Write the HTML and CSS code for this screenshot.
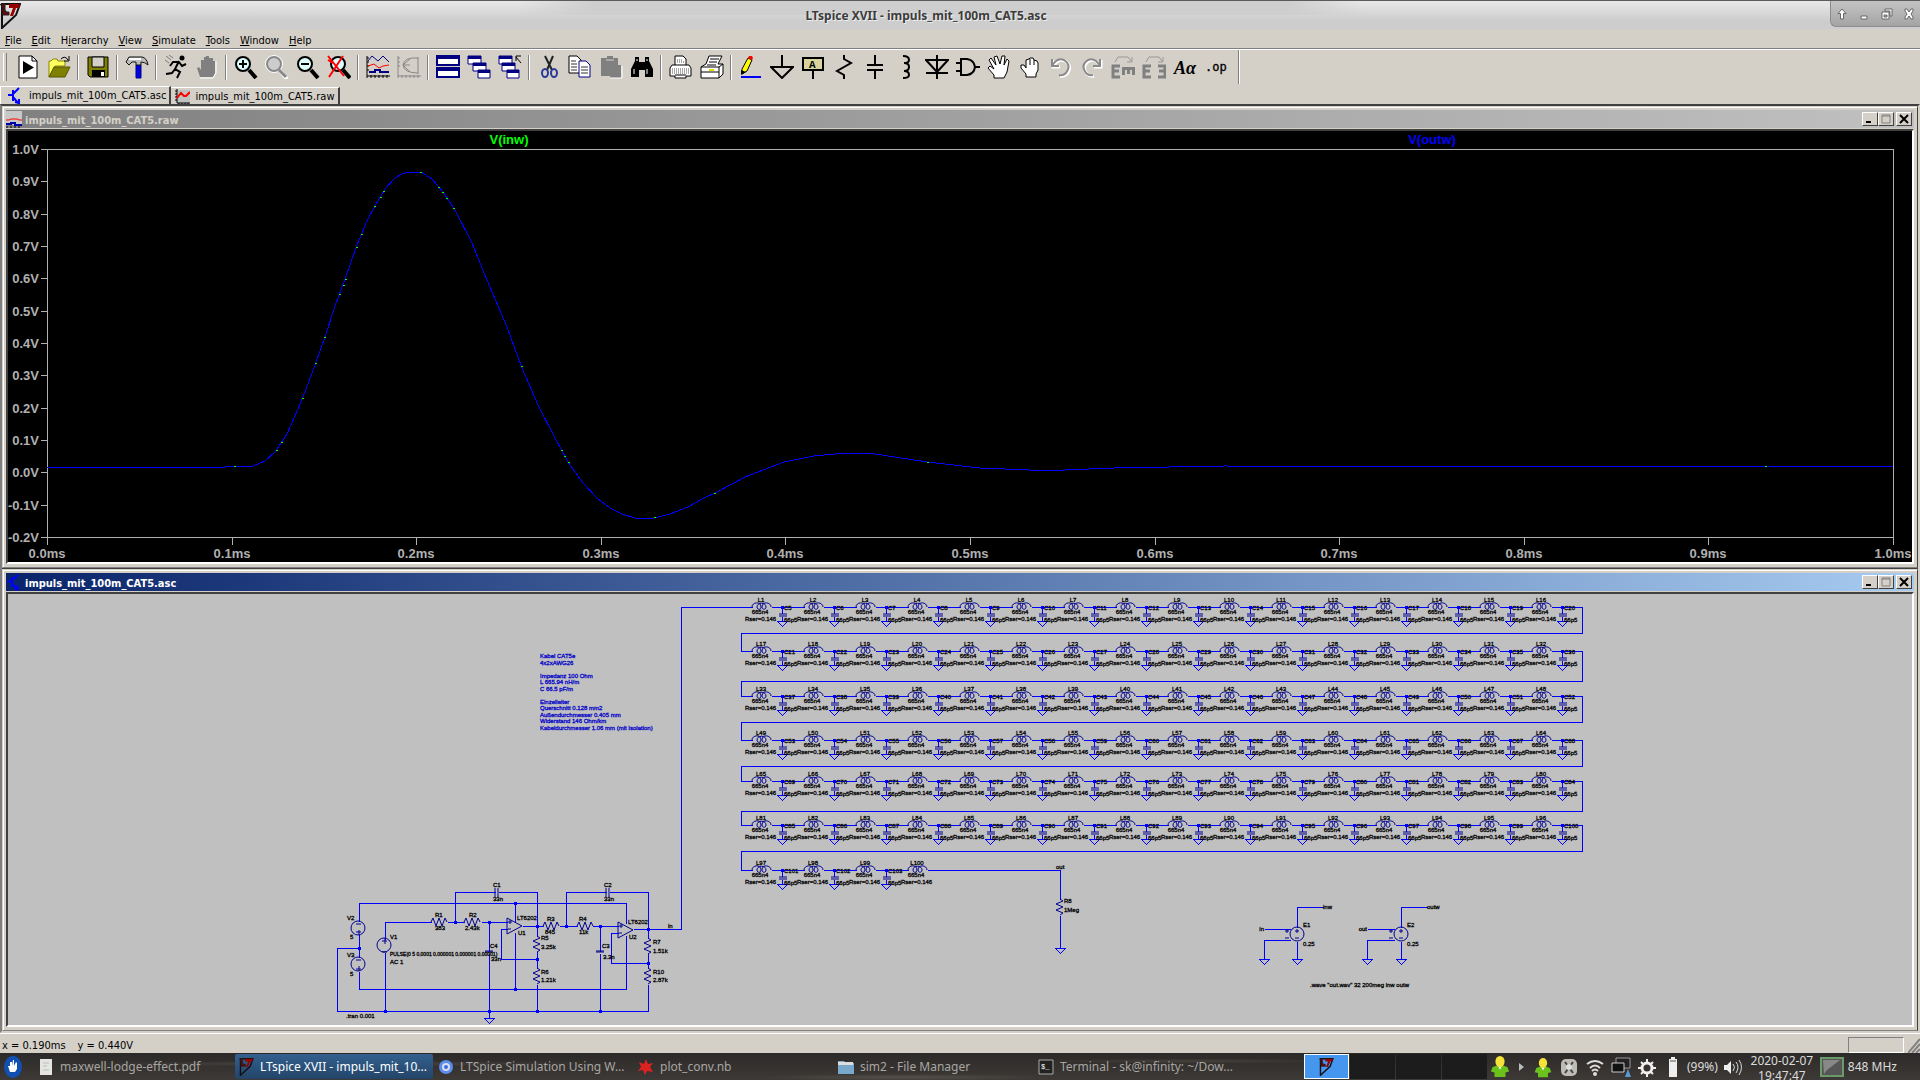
FILE: index.html
```html
<!DOCTYPE html>
<html lang="en">
<head>
    <meta charset="UTF-8">
    <meta name="viewport" content="width=device-width, initial-scale=1.0">
    <title>LTspice XVII - impuls_mit_100m_CAT5.asc</title>
    <link rel="stylesheet" href="styles.css">
</head>
<body>

<!-- Shared logo -->
<svg class="defs" aria-hidden="true">
    <symbol id="lt" viewBox="0 0 22 26">
        <path d="M3 1H21L17 12L3 25Z" fill="none" stroke="#111" stroke-width="2"/>
        <path d="M1 1L10 12M3 1H6V9H10V12H4Z" fill="#700" stroke="#222"/>
        <path d="M10 1H21L20 5H17L14 13H11L14 5H10Z" fill="#900"/>
    </symbol>
    <symbol id="transistor" viewBox="0 0 14 18">
        <path d="M0 8H5M5 3V14M5 7L11 1M5 10L11 17M7 15L11 16V12" fill="none" stroke="#00f" stroke-width="2"/>
    </symbol>
    <symbol id="person" viewBox="0 0 22 24">
        <path d="M3 12Q11 8 19 12L21 17L17 18V23H5V18L1 17Z" fill="#6cc21c"/>
        <path d="M9 11L11 15L13 11Z" fill="#fff"/>
        <ellipse cx="11" cy="6" rx="5" ry="6" fill="#f5e33a"/>
    </symbol>
</svg>

<header class="titlebar">
    <svg class="logo" width="22" height="26"><use href="#lt"/></svg>
    <h1>LTspice XVII - impuls_mit_100m_CAT5.asc</h1>
    <div class="wm-buttons">
        <button aria-label="Shade"><svg width="12" height="12"><path d="M6 1L10 5.500H7.500V11H4.500V5.500H2Z"/></svg></button>
        <button aria-label="Minimize"><svg width="12" height="12"><path d="M3 8H9V11H3Z"/></svg></button>
        <button aria-label="Restore"><svg width="12" height="12"><path d="M4 1H11V8H9V3H4Z"/><path d="M1 4H8V11H1ZM3 7H6V9H3Z" fill-rule="evenodd"/></svg></button>
        <button aria-label="Close"><svg width="12" height="12"><path d="M2 1H4L6 4L8 1H10V3L8 6L10 9V11H8L6 8L4 11H2V9L4 6L2 3Z"/></svg></button>
    </div>
</header>

<nav class="menubar">
    <button><u>F</u>ile</button>
    <button><u>E</u>dit</button>
    <button>H<u>i</u>erarchy</button>
    <button><u>V</u>iew</button>
    <button><u>S</u>imulate</button>
    <button><u>T</u>ools</button>
    <button><u>W</u>indow</button>
    <button><u>H</u>elp</button>
</nav>

<div class="toolbar">
    <button aria-label="New schematic"><svg viewBox="0 0 24 24"><path d="M3 1H16L21 6V23H3Z" fill="#fff" stroke="#000"/><path d="M16 1V6H21" fill="none" stroke="#000"/><path d="M7 6L18 12.500L7 19Z"/></svg></button>
    <button aria-label="Open"><svg viewBox="0 0 24 24"><path d="M2 22V6H4L6 4H10L11 6H18V11H8Z" fill="#ffff60" stroke="#880"/><path d="M2 22L7 12H23L18 22Z" fill="#808000" stroke="#550"/><path d="M14 4Q18 0 21 5M22 1V6H17" fill="none" stroke="#000"/></svg></button>
    <span class="sep"></span>
    <button aria-label="Save"><svg viewBox="0 0 24 24"><path d="M2 2H22V22H4L2 20Z" fill="#808000" stroke="#000"/><path d="M6 2H18V12H6Z" fill="#d4d0c8" stroke="#000"/><path d="M6 15H19V22H6Z"/><path d="M15 17H18V21H15Z" fill="#fff"/></svg></button>
    <span class="sep"></span>
    <button aria-label="Control panel"><svg viewBox="0 0 24 24"><path d="M11 10H16V23H11Z" fill="#0000e0" stroke="#008"/><path d="M1 7L4 2H17Q22 3 23 10Q20 7 16 7V10H11V7L7 7L4 10Z" fill="#bbb" stroke="#111"/><path d="M4 4H16" stroke="#fff" stroke-width="2"/></svg></button>
    <span class="sep"></span>
    <button aria-label="Run"><svg viewBox="0 0 24 24"><circle cx="18" cy="3" r="2.500"/><path d="M15 6L11 14L16 17L13 23M11 14L8 18L2 19M15 7L9 7L6 11M15 7L18 11L22 9" fill="none" stroke="#000" stroke-width="2"/><path d="M2 1L7 5M1 5L5 8M5 0L9 3" stroke="#777"/></svg></button>
    <button aria-label="Halt" disabled><svg viewBox="0 0 24 24"><path d="M5 22L2 13L4 12L6 15V5H9V2H11V1H14V3H18V6H20V18L18 22Z" fill="#808080"/><path d="M5 23H18L21 18V6" fill="none" stroke="#fff"/></svg></button>
    <span class="sep"></span>
    <button aria-label="Zoom in"><svg viewBox="0 0 24 24"><circle cx="9" cy="9" r="7" fill="#dff" stroke="#000" stroke-width="2"/><path d="M15 15L22 23" stroke="#000" stroke-width="4"/><path d="M9 5V13M5 9H13" stroke="#000" stroke-width="2"/></svg></button>
    <button aria-label="Pan" disabled><svg viewBox="0 0 24 24"><circle cx="9" cy="9" r="7" fill="none" stroke="#fff" stroke-width="4"/><circle cx="9" cy="9" r="7" fill="#ccc" stroke="#888" stroke-width="2"/><path d="M15 16L22 24" stroke="#fff" stroke-width="4"/><path d="M14 15L21 22" stroke="#888" stroke-width="3"/></svg></button>
    <button aria-label="Zoom out"><svg viewBox="0 0 24 24"><circle cx="9" cy="9" r="7" fill="#dff" stroke="#000" stroke-width="2"/><path d="M15 15L22 23" stroke="#000" stroke-width="4"/><path d="M5 9H13" stroke="#000" stroke-width="2"/></svg></button>
    <button aria-label="Zoom to fit"><svg viewBox="0 0 24 24"><circle cx="11" cy="9" r="7" fill="#dff" stroke="#000" stroke-width="2"/><path d="M16 15L23 23" stroke="#000" stroke-width="4"/><path d="M1 1L17 21M16 1L2 22M1 5L6 8" stroke="#f00" stroke-width="2"/></svg></button>
    <span class="sep"></span>
    <button aria-label="Autorange"><svg viewBox="0 0 24 24"><path d="M1 1V23M1 21H24M1 3H3M1 7H3M1 11H3M1 15H3M5 20V23M9 20V23M13 20V23M17 20V23M21 20V23" stroke="#000"/><path d="M2 6L6 1L12 6L17 1L23 7" fill="none" stroke="#000080"/><path d="M2 11L8 9L13 13L17 11L23 10" fill="none" stroke="#f00"/><path d="M3 17H9V15H14V17H23" fill="none" stroke="#000080" stroke-width="2"/></svg></button>
    <button aria-label="Nyquist" disabled><svg viewBox="0 0 24 24"><path d="M1 1V23M1 21H24M1 3H3M1 7H3M1 11H3M5 20V23M9 20V23M13 20V23M17 20V23M21 20V23" stroke="#888"/><path d="M21 2V19M21 3Q7 2 6 10Q7 18 21 18M6 10H13M13 4L6 10L13 17" fill="none" stroke="#888"/></svg></button>
    <span class="sep"></span>
    <button aria-label="Tile windows"><svg viewBox="0 0 24 24"><path d="M1 1H23V10H1ZM1 13H23V22H1Z" fill="#fff" stroke="#000080" stroke-width="2"/><path d="M1 2H23V4H1ZM1 14H23V16H1Z" fill="#000080"/></svg></button>
    <button aria-label="Cascade windows"><svg viewBox="0 0 24 24"><g fill="#fff" stroke="#000080"><path d="M1 1H14V9H1ZM6 8H19V16H6ZM11 15H23V23H11Z"/><path d="M1 2.500H14M6 9.500H19M11 16.500H23" stroke-width="3"/></g></svg></button>
    <button aria-label="Close all windows"><svg viewBox="0 0 24 24"><g fill="#fff" stroke="#000080"><path d="M1 1H14V9H1ZM4 8H17V16H4ZM9 15H21V23H9Z"/><path d="M1 2.500H14M4 9.500H17M9 16.500H21" stroke-width="3"/></g><path d="M23 8L18 2M18 6V1H23" fill="none" stroke="#000"/></svg></button>
    <span class="sep"></span>
    <button aria-label="Cut"><svg viewBox="0 0 24 24"><path d="M8 1L15 15M16 1L10 15" stroke="#222" stroke-width="2"/><g fill="none" stroke="#2b3a9a" stroke-width="2"><ellipse cx="8" cy="18" rx="3" ry="4"/><ellipse cx="17" cy="18" rx="3" ry="4"/></g></svg></button>
    <button aria-label="Copy"><svg viewBox="0 0 24 24"><path d="M1 1H9L13 5V18H1Z" fill="#fff" stroke="#000"/><path d="M11 6H18L22 10V22H11Z" fill="#fff" stroke="#000080"/><path d="M3 6H8M3 9H9M3 12H9M3 15H9M13 12H20M13 15H20M13 18H20" stroke="#333"/></svg></button>
    <button aria-label="Paste" disabled><svg viewBox="0 0 24 24"><path d="M2 3H8V1H14V3H19V10H22V23H11V21H2Z" fill="#808080"/><path d="M7 5H15" stroke="#d4d0c8"/><path d="M11 23H23V11" fill="none" stroke="#fff"/></svg></button>
    <button aria-label="Find"><svg viewBox="0 0 24 24"><path d="M5 2H9V7H15V2H19V6L23 14V22H15V15H9V22H1V14L5 6Z"/><path d="M4 14V19M17 14V19M7 4V6M17 4V6" stroke="#fff"/></svg></button>
    <span class="sep"></span>
    <button aria-label="Print setup"><svg viewBox="0 0 24 24"><path d="M6 10V1H14L17 4V10H20L22 13V21H17V23H6V21H1V13L3 10Z" fill="#fff" stroke="#000"/><path d="M3 14H20M3 16H20M3 18H20M8 5H14M8 7H15" stroke="#555" stroke-dasharray="1 1"/><path d="M6 10H17M6 20H17" stroke="#000"/></svg></button>
    <button aria-label="Print"><svg viewBox="0 0 24 24"><path d="M1 12L6 9L9 1H22L18 9H23V19L19 23H1Z" fill="#fff" stroke="#000"/><path d="M1 12H19L23 9M19 12V23M1 17H19M10 4H19M9 7H17M7 10H16" fill="none" stroke="#000"/><path d="M9 15H14" stroke="#dd0" stroke-width="2"/></svg></button>
    <span class="sep"></span>
    <button aria-label="Wire"><svg viewBox="0 0 24 24"><path d="M3 19L3 14L9 3L13 5L8 16Z" fill="#ff0" stroke="#000"/><path d="M9 3L10 1H13L14 3L13 5Z" fill="#f00"/><path d="M2 15L2 20L7 17Z"/><path d="M2 22H22" stroke="#00f" stroke-width="2"/></svg></button>
    <button aria-label="Ground"><svg viewBox="0 0 24 24"><path d="M12 0V12M1 12H23L12 23Z" fill="none" stroke="#000" stroke-width="2"/></svg></button>
    <button aria-label="Label net"><svg viewBox="0 0 24 24"><path d="M2 3H22V15H2Z" fill="#d8d49c" stroke="#000" stroke-width="2"/><path d="M12 15V24" stroke="#000" stroke-width="2"/><text x="8" y="13" class="icon-mono">A</text></svg></button>
    <button aria-label="Resistor"><svg viewBox="0 0 24 24"><path d="M12 0V4L19 8L5 16L12 20V24" fill="none" stroke="#000" stroke-width="2"/></svg></button>
    <button aria-label="Capacitor"><svg viewBox="0 0 24 24"><path d="M12 0V10M12 15V24M4 10H20M4 15H20" stroke="#000" stroke-width="2"/></svg></button>
    <button aria-label="Inductor"><svg viewBox="0 0 24 24"><path d="M9 1Q15 1 15 5Q15 8 10 8Q15 8 15 12Q15 16 10 16Q15 16 15 20Q15 23 9 23" fill="none" stroke="#000" stroke-width="2"/></svg></button>
    <button aria-label="Diode"><svg viewBox="0 0 24 24"><path d="M12 0V24M1 5H23L12 17ZM1 18H23" fill="none" stroke="#000" stroke-width="2"/></svg></button>
    <button aria-label="Component"><svg viewBox="0 0 24 24"><path d="M5 4H11Q18 5 19 12Q18 19 11 20H5ZM0 8H5M0 16H5M19 12H24" fill="none" stroke="#000" stroke-width="2"/></svg></button>
    <button aria-label="Move"><svg viewBox="0 0 24 24"><path d="M7 23V20L1 13L3 11L7 14L2 5L4 3L9 10L7 2L10 1L13 9L15 1H18L17 10L20 4L22 6L20 17L17 23Z" fill="#fff" stroke="#000"/></svg></button>
    <button aria-label="Drag"><svg viewBox="0 0 24 24"><path d="M8 22V19L3 13V10H6L8 13V5L11 4L12 3H15L16 5L19 6L20 8V15L18 19V22Z" fill="#fff" stroke="#000"/><path d="M12 4V10M16 5V10" stroke="#000"/></svg></button>
    <button aria-label="Undo" disabled><svg viewBox="0 0 24 24"><path d="M4 5V12H11M4 12Q9 3 16 6Q24 11 18 19Q15 22 11 21" fill="none" stroke="#fff" stroke-width="3"/><path d="M3 4V11H10M3 11Q8 2 15 5Q23 10 17 18Q14 21 10 20" fill="none" stroke="#8a8a8a" stroke-width="2"/></svg></button>
    <button aria-label="Redo" disabled><svg viewBox="0 0 24 24"><path d="M21 5V12H14M21 12Q16 3 9 6Q1 11 7 19Q10 22 14 21" fill="none" stroke="#fff" stroke-width="3"/><path d="M20 4V11H13M20 11Q15 2 8 5Q0 10 6 18Q9 21 13 20" fill="none" stroke="#8a8a8a" stroke-width="2"/></svg></button>
    <button aria-label="Rotate" disabled><svg viewBox="0 0 24 24"><path d="M4 7L7 2H17L20 6M21 2V7H16" fill="none" stroke="#999"/><path d="M9 11H2V22H9M2 16H8" fill="none" stroke="#808080" stroke-width="3"/><path d="M11 12H24V15H11ZM11 15H14V20H11ZM16 15H19V19H16ZM21 15H24V20H21Z" fill="#808080"/></svg></button>
    <button aria-label="Mirror" disabled><svg viewBox="0 0 24 24"><path d="M4 7L7 2H17L20 6M21 2V7H16" fill="none" stroke="#999"/><path d="M9 11H2V22H9M2 16H8M16 11H23V22H16M23 16H17" fill="none" stroke="#808080" stroke-width="3"/></svg></button>
    <button aria-label="Text"><svg viewBox="0 0 24 24"><text x="1" y="19" class="icon-serif">Aα</text></svg></button>
    <button aria-label="SPICE directive"><svg viewBox="0 0 24 24"><text x="1" y="16" class="icon-op">.op</text></svg></button>
    <span class="toolbar-end"></span>
</div>

<div class="tabs" role="tablist">
    <button class="tab active" role="tab"><svg width="14" height="18"><use href="#transistor"/></svg>impuls_mit_100m_CAT5.asc</button>
    <button class="tab" role="tab"><svg width="16" height="16"><path d="M3 1H16V14H3Z" fill="#c0c0c0"/><path d="M3 0V14H16M1 2H3M1 5H3M1 8H3M1 11H3M5 14V16M8 14V16M11 14V16M14 14V16" fill="none" stroke="#000"/><path d="M3 9L7 4L10 7L12 7L16 3" fill="none" stroke="#f00" stroke-width="2"/></svg>impuls_mit_100m_CAT5.raw</button>
</div>

<main class="workspace">
    <!-- Waveform window -->
    <section class="window">
        <div class="caption">
            <svg width="16" height="17"><path d="M0 0H16V14H0Z" fill="#c8c8c8"/><path d="M0 9H3L5 8H11L13 9H16" fill="none" stroke="#f00"/><path d="M0 13H5V12H9V14H16" fill="none" stroke="#00a" stroke-width="2"/><path d="M0 16H16" stroke="#000" stroke-dasharray="2 2"/></svg>
            <h2>impuls_mit_100m_CAT5.raw</h2>
            <div class="caption-buttons">
                <button aria-label="Minimize"><svg width="12" height="10"><path d="M2 8H7" stroke="#000" stroke-width="2"/></svg></button><button aria-label="Maximize"><svg width="12" height="10"><path d="M2 1H10V9H2ZM2 2H10" fill="none" stroke="#808080"/></svg></button><button aria-label="Close" class="close"><svg width="12" height="10"><path d="M2 1L10 9M10 1L2 9" stroke="#000" stroke-width="2"/></svg></button>
            </div>
        </div>
        <div class="client plot"><svg id="plot" viewBox="8 131 1904 431"></svg></div>
    </section>

    <!-- Schematic window -->
    <section class="window">
        <div class="caption current">
            <svg width="16" height="17"><use href="#transistor"/></svg>
            <h2>impuls_mit_100m_CAT5.asc</h2>
            <div class="caption-buttons">
                <button aria-label="Minimize"><svg width="12" height="10"><path d="M2 8H7" stroke="#000" stroke-width="2"/></svg></button><button aria-label="Maximize"><svg width="12" height="10"><path d="M2 1H10V9H2ZM2 2H10" fill="none" stroke="#808080"/></svg></button><button aria-label="Close" class="close"><svg width="12" height="10"><path d="M2 1L10 9M10 1L2 9" stroke="#000" stroke-width="2"/></svg></button>
            </div>
        </div>
        <div class="client schematic"><svg id="schematic" viewBox="8 594 1904 431"></svg></div>
    </section>
</main>

<div class="statusbar">
    <span>x = 0.190ms</span>
    <span>y = 0.440V</span>
    <span class="status-box"></span>
    <svg width="12" height="16"><path d="M0 16L12 2M4 16L12 7M8 16L12 12" stroke="#808080" stroke-width="2"/></svg>
</div>

<footer class="taskbar">
    <button class="start" aria-label="Applications"><svg width="18" height="26"><ellipse cx="9" cy="13" rx="9" ry="11" fill="#1150b0"/><path d="M6 18L4 12L6 12V8H8V12L9 6H10V12L12 8L13 9V15L11 18Z" fill="#fff"/></svg></button>
    <button class="task"><svg width="22" height="18"><path d="M5 1H17V17H5Z" fill="#e4e4e0"/><path d="M8 5H14M8 8H12M8 12H14" stroke="#bbb"/></svg>maxwell-lodge-effect.pdf</button>
    <button class="task active"><svg width="22" height="18"><use href="#lt"/></svg>LTspice XVII - impuls_mit_10...</button>
    <button class="task"><svg width="22" height="18"><circle cx="11" cy="9" r="7" fill="#5b8def"/><circle cx="11" cy="9" r="3" fill="#3b6fd8" stroke="#dde" stroke-width="2"/></svg>LTSpice Simulation Using W...</button>
    <button class="task"><svg width="22" height="18"><path d="M11 1L13 6L18 5L15 9L18 14L12 13L10 17L8 12L3 13L6 9L4 4L9 6Z" fill="#d22"/></svg>plot_conv.nb</button>
    <button class="task"><svg width="22" height="18"><path d="M3 3H9L11 5H19V16H3Z" fill="#78a8cc"/><path d="M3 4H18V7H3Z" fill="#ddd"/></svg>sim2 - File Manager</button>
    <button class="task"><svg width="22" height="18"><path d="M4 2H18V16H4Z" fill="#222" stroke="#aaa"/><text x="6" y="11" class="prompt">$_</text></svg>Terminal - sk@infinity: ~/Dow...</button>
    <div class="pager">
        <button class="here" aria-label="Workspace 1"><svg width="16" height="18"><use href="#lt"/></svg></button>
        <button aria-label="Workspace 2"></button>
        <button aria-label="Workspace 3"></button>
        <button aria-label="Workspace 4"></button>
    </div>
    <div class="tray">
        <svg width="26" height="22"><use href="#person"/></svg>
        <svg width="17" height="22"><path d="M6 7L11 11L6 15Z" fill="#bbb"/></svg>
        <svg width="26" height="22"><use href="#person" y="2" height="20"/></svg>
        <svg width="26" height="22"><rect x="5" y="3" width="16" height="17" rx="5" fill="#bdbdb5"/><path d="M9 6L17 17M17 6L9 17" stroke="#444" stroke-width="2"/><circle cx="13" cy="11" r="3" fill="#ddd"/></svg>
        <svg width="26" height="22"><path d="M5 8Q13 2 21 8M8 12Q13 7 18 12M10 15Q13 12 16 15" fill="none" stroke="#ddd" stroke-width="2"/><circle cx="13" cy="18" r="2" fill="#ddd"/></svg>
        <svg width="26" height="22"><path d="M8 2H22V12H8Z" fill="#222" stroke="#999"/><path d="M4 7H16V16H4Z" fill="#111" stroke="#ccc"/><path d="M17 21L20 13L23 21Z" fill="#5b9bd5"/></svg>
        <svg width="26" height="22"><circle cx="13" cy="12" r="5" fill="none" stroke="#eee" stroke-width="3"/><path d="M13 3V7M13 17V21M4 12H8M18 12H22M7 6L9 8M17 16L19 18M19 6L17 8M9 16L7 18" stroke="#eee" stroke-width="2"/></svg>
        <svg width="26" height="22"><path d="M9 3H17V21H9ZM11 1H15V3H11Z" fill="#eee"/><path d="M10 5H16" stroke="#555"/></svg>
        <span>(99%)</span>
        <svg width="26" height="22"><path d="M5 9H8L12 5V18L8 14H5Z" fill="#eee"/><path d="M14 8Q17 11 14 15M17 6Q21 11 17 17M20 4Q25 11 20 19" fill="none" stroke="#ddd"/></svg>
        <time class="clock" datetime="2020-02-07T19:47:47">2020-02-07<br>19:47:47</time>
        <svg width="26" height="22"><path d="M2 2H24V20H2Z" fill="#555" stroke="#6a9a6a" stroke-width="2"/><path d="M4 4H21L8 14L5 18Z" fill="#888"/></svg>
        <span>848 MHz</span>
    </div>
</footer>

<script src="script.js"></script>

</body>
</html>
```

FILE: styles.css
```css
* {
    box-sizing: border-box;
}
body {
    font-family: "DejaVu Sans Condensed", "DejaVu Sans", sans-serif;
    font-size: 11px;
    font-stretch: condensed;
    color: #000;
    background-color: #d4d0c8;
    margin: 0;
    min-height: 100vh;
    display: flex;
    flex-direction: column;
    overflow: hidden;
}
button {
    font: inherit;
    color: inherit;
    background: none;
    border: none;
    margin: 0;
    padding: 0;
}
h1, h2 {
    margin: 0;
}
svg {
    display: block;
    flex: none;
}
.defs {
    width: 0;
    height: 0;
    position: absolute;
}

/* Outer window title */
.titlebar {
    height: 29px;
    display: grid;
    grid-template-columns: 24px 1fr 92px;
    border-top: 1px solid #5c5a5a;
    background:
        linear-gradient(90deg, transparent 27%, #cecece 31%, #cecece 67%, transparent 71%) no-repeat 0 0 / 100% 14px,
        linear-gradient(#e8e8e8, #cdcdcd 70%);
}
.titlebar .logo {
    margin: 2px 0 0 -1px;
}
.titlebar h1 {
    font: bold 12px/30px "Noto Sans", sans-serif;
    color: #3c3c3c;
    text-align: center;
    text-shadow: 1px 1px 0 #eee;
}
.wm-buttons {
    height: 26px;
    display: flex;
    justify-content: space-around;
    align-items: center;
    border-bottom: 1px solid #8c8c8c;
    border-left: 1px solid #8c8c8c;
    border-bottom-left-radius: 6px;
    background: linear-gradient(#c4c4c4, #a4a4a4);
    margin-left: 2px;
}
.wm-buttons path {
    fill: #fff;
    stroke: #666;
}

/* Menu and toolbar */
.menubar {
    height: 20px;
    display: flex;
    border-bottom: 1px solid #808080;
}
.menubar button {
    padding: 5px 5px 1px;
}
.toolbar {
    height: 37px;
    display: flex;
    align-items: center;
    border-top: 1px solid #fff;
    padding: 0 0 2px 3px;
}
.toolbar::before {
    content: "";
    width: 2px;
    height: 28px;
    border-left: 1px solid #fff;
    border-right: 1px solid #808080;
    margin-right: 5px;
}
.toolbar button {
    width: 31px;
    display: flex;
    justify-content: center;
}
.toolbar button svg {
    width: 24px;
    height: 24px;
}
.sep {
    width: 2px;
    height: 25px;
    border-left: 1px solid #808080;
    border-right: 1px solid #fff;
    margin: 0 3px;
}
.toolbar-end {
    width: 2px;
    height: 34px;
    border-left: 1px solid #808080;
    border-right: 1px solid #fff;
    margin-left: 7px;
}
.icon-mono {
    font: bold 11px "Liberation Mono", monospace;
}
.icon-serif {
    font: italic bold 18px "Liberation Serif", serif;
}
.icon-op {
    font: 12px "DejaVu Sans Mono", monospace;
    stroke: #000;
    stroke-width: .3;
}
.tabs {
    height: 18px;
    display: flex;
    align-items: flex-end;
}
.tab {
    height: 17px;
    display: flex;
    align-items: center;
    gap: 5px;
    padding: 1px 3px 0;
    border-top: 1px solid #fff;
    border-right: 2px solid #404040;
}
.tab.active {
    height: 18px;
    gap: 7px;
    padding: 0 3px 0 7px;
    border-left: 1px solid #fff;
}

/* MDI area */
.workspace {
    flex: 1;
    min-height: 0;
    display: flex;
    flex-direction: column;
    gap: 1px;
    background-color: #404040;
    border-top: 2px solid #404040;
    border-left: 2px solid #808080;
    border-right: 2px solid #d4d0c8;
    border-bottom: 2px solid #d4d0c8;
}
.window {
    flex: 1;
    min-height: 0;
    display: flex;
    flex-direction: column;
    background-color: #d4d0c8;
    border: 1px solid #d4d0c8;
    border-right-color: #404040;
    border-bottom-color: #808080;
    box-shadow: inset 1px 1px 0 #fff;
    padding: 3px;
}
.caption {
    height: 18px;
    display: flex;
    align-items: center;
    gap: 3px;
    padding-right: 2px;
    margin-bottom: 1px;
    color: #d4d0c8;
    background: linear-gradient(90deg, #808080, #c0c0c0);
}
.caption.current {
    color: #fff;
    background: linear-gradient(90deg, #0a246a, #a6caf0);
}
.caption h2 {
    flex: 1;
    font-size: 11px;
    padding-top: 2px;
}
.caption-buttons {
    display: flex;
}
.caption-buttons button {
    width: 16px;
    height: 14px;
    display: flex;
    justify-content: center;
    align-items: center;
    background-color: #d4d0c8;
    border: 1px solid #fff;
    border-right-color: #404040;
    border-bottom-color: #404040;
}
.caption-buttons .close {
    margin-left: 2px;
}
.client {
    flex: 1;
    min-height: 0;
    border: 2px solid #fff;
    border-top-color: #404040;
    border-left-color: #404040;
}
.client svg {
    width: 100%;
    height: 100%;
}

/* Waveform plot */
.plot {
    background-color: #000;
}
.axis {
    fill: none;
    stroke: #b0b0b0;
    shape-rendering: crispEdges;
}
.axis-label {
    font: bold 13px "Liberation Sans", sans-serif;
    fill: #b0b0b0;
}
.trace-in {
    font: bold 13px "Liberation Sans", sans-serif;
    fill: #0f0;
}
.trace-out {
    font: bold 13px "Liberation Sans", sans-serif;
    fill: #00f;
}
.trace {
    fill: none;
    stroke: #00f;
    shape-rendering: crispEdges;
}

/* Schematic */
.schematic {
    background-color: #c0c0c0;
}
.wire {
    fill: none;
    stroke: #00f;
    shape-rendering: crispEdges;
}
.part {
    fill: none;
    stroke: #000090;
}
.node {
    fill: #00f;
    shape-rendering: crispEdges;
}
.note {
    font: 6px "Liberation Sans", sans-serif;
    fill: #000;
    stroke: #000;
    stroke-width: .3;
}
.note.small {
    font-size: 5px;
}
.note.comment {
    fill: #0000c8;
    stroke: #0000c8;
}

.statusbar {
    height: 20px;
    display: flex;
    align-items: center;
    gap: 12px;
    border-top: 1px solid #fff;
    padding: 3px 0 0 2px;
}
.status-box {
    width: 56px;
    height: 16px;
    border: 1px solid #fff;
    border-top-color: #808080;
    border-left-color: #808080;
    margin-left: auto;
}
.statusbar svg {
    margin-left: -8px;
}

/* Desktop panel */
.taskbar {
    height: 27px;
    display: flex;
    align-items: center;
    font: 12px/15px "Noto Sans", sans-serif;
    color: #a8a6a2;
    background:
        radial-gradient(ellipse at 18% 40%, #4a4542, transparent 12%),
        radial-gradient(ellipse at 47% 90%, #55504a, transparent 10%),
        radial-gradient(ellipse at 62% 30%, #46423c, transparent 9%),
        linear-gradient(#2c2a29, #3d3936);
}
.start {
    width: 31px;
    padding-left: 4px;
    margin-right: 4px;
}
.task {
    width: 198px;
    height: 25px;
    display: flex;
    align-items: center;
    gap: 3px;
    border-radius: 2px;
    margin-right: 2px;
    white-space: nowrap;
}
.task.active {
    color: #fff;
    background: linear-gradient(#33608f, #234468);
}
.prompt {
    font: 7px "Liberation Mono", monospace;
    fill: #fff;
}
.pager {
    display: flex;
    gap: 1px;
    margin-left: auto;
}
.pager button {
    width: 45px;
    height: 25px;
    background-color: #1c1c1c;
}
.pager .here {
    display: flex;
    justify-content: center;
    align-items: center;
    background-color: #4596ee;
    border: 1px solid #fff;
}
.tray {
    display: flex;
    align-items: center;
    color: #dcdcdc;
    padding-right: 22px;
}
.tray span {
    margin: 0 1px;
}
.clock {
    width: 74px;
    height: 27px;
    overflow: hidden;
    text-align: center;
}
.tray span:last-child {
    margin-left: 3px;
}
```

FILE: script.js
```javascript
const plot = document.getElementById('plot');
const schematic = document.getElementById('schematic');

// ---- Waveform plot ----
const left = 47, right = 1893, top1V = 149, bottom = 537;

// Screen points of the V(outw) trace
const trace = [
    [47, 467], [225, 467], [240, 466], [253, 466], [265, 461], [275, 452], [287, 434], [295, 416],
    [303, 397], [315, 365], [325, 337], [335, 306], [345, 279], [357, 245], [367, 221],
    [375, 206], [385, 189], [395, 178], [402, 174], [408, 172], [421, 172], [432, 179],
    [443, 192], [455, 210], [472, 243], [487, 280], [507, 327], [522, 368], [538, 405],
    [555, 438], [568, 462], [583, 483], [597, 498], [610, 508], [622, 514], [635, 518],
    [654, 518], [670, 514], [688, 507], [702, 499], [717, 492], [745, 477], [784, 462],
    [814, 456], [845, 453], [875, 454], [927, 462], [980, 468], [1029, 470], [1065, 470],
    [1114, 468], [1225, 466], [1347, 467], [1600, 466], [1893, 467]
];

// Pixels where V(inw) shows through
const visibleIn = [
    [234, 466], [276, 450], [281, 442], [302, 398], [315, 363], [324, 337], [339, 294],
    [343, 285], [345, 279], [356, 247], [361, 234], [374, 206], [380, 197], [383, 191],
    [420, 172], [438, 187], [442, 192], [446, 198], [453, 208], [521, 366], [561, 450],
    [564, 456], [568, 462], [654, 517], [714, 493], [927, 462], [1765, 466]
];

function drawPlot() {
    let axis = `M${left} ${top1V}H${right}V${bottom}H${left}Z`;
    let labels = '';
    for (let i = 0; i <= 12; i++) {
        const y = Math.round(top1V + i * (bottom - top1V) / 12);
        axis += `M${left - 7} ${y}H${left}`;
        labels += `<text class="axis-label" text-anchor="end" x="39" y="${y + 5}">${((10 - i) / 10).toFixed(1)}V</text>`;
    }
    for (let i = 0; i <= 10; i++) {
        const x = Math.round(left + i * (right - left) / 10);
        axis += `M${x} ${bottom}V${bottom + 7}`;
        labels += `<text class="axis-label" text-anchor="middle" x="${x}" y="558">${(i / 10).toFixed(1)}ms</text>`;
    }
    const dots = visibleIn.map(p => `<rect x="${p[0]}" y="${p[1]}" width="2" height="1" fill="#0f0"/>`).join('');
    plot.innerHTML = `
        <path class="axis" d="${axis}" transform="translate(.5 .5)"/>${labels}
        <text class="trace-in" text-anchor="middle" x="509" y="144">V(inw)</text>
        <text class="trace-out" text-anchor="middle" x="1432" y="144">V(outw)</text>
        <polyline class="trace" points="${trace.join(' ')}"/>${dots}`;
}

// ---- Schematic ----
let out = '';

function wire(d) { out += `<path class="wire" transform="translate(.5 .5)" d="${d}"/>`; }
function part(d) { out += `<path class="part" d="${d}"/>`; }
function node(x, y) { out += `<rect class="node" x="${x - 1}" y="${y - 1}" width="3" height="3"/>`; }
function ground(x, y) { wire(`M${x - 5} ${y}H${x + 5}L${x} ${y + 5}Z`); }
// y is the middle of the text line
function note(x, y, text, anchor = 'start', cls = '') {
    out += `<text class="note ${cls}" text-anchor="${anchor}" x="${x}" y="${y + 2}">${text}</text>`;
}
function resistorH(x, y) { part(`M${x} ${y}l2 -4l3 8l3 -8l3 8l3 -8l2 4`); }
function resistorV(x, y) { part(`M${x} ${y}l3 2l-7 3l7 3l-7 3l7 3l-3 2`); }
function source(x, y) { part(`M${x - 7} ${y}a7 7 0 1 0 14 0a7 7 0 1 0 -14 0`); }

// Delay line: 100 LC sections in rows of 16
function drawDelayLine() {
    const rows = [607, 651, 696, 740, 781, 825, 870];
    const returns = [633, 681, 722, 766, 811, 851];
    const pitch = 52;
    let n = 1;
    rows.forEach((y, r) => {
        const count = r === 6 ? 4 : 16;
        for (let i = 0; i < count; i++, n++) {
            const x = 752 + i * pitch;
            part(`M${x} ${y}C${x} ${y - 5} ${x + 9} ${y - 6} ${x + 9} ${y}C${x + 9} ${y + 3} ${x + 5} ${y + 3} ${x + 5} ${y}C${x + 5} ${y - 5} ${x + 14} ${y - 5} ${x + 14} ${y}C${x + 14} ${y + 3} ${x + 10} ${y + 3} ${x + 10} ${y}C${x + 10} ${y - 6} ${x + 19} ${y - 5} ${x + 19} ${y}`);
            note(x + 9, y - 7, 'L' + n, 'middle');
            note(x + 8, y + 5, '665n4', 'middle');
            note(x - 7, y + 12, 'Rser=0.146');
            if (n === 100) {
                wire(`M${x + 19} ${y}H1060V899`);
                continue;
            }
            const c = x + 30;
            wire(`M${x + 19} ${y}H${i === 15 ? 1582 : x + pitch}`);
            node(c, y);
            wire(`M${c} ${y}V${y + 6}M${c} ${y + 9}V${y + 14}`);
            part(`M${c - 3} ${y + 7}h8M${c - 3} ${y + 9}h8`);
            ground(c, y + 14);
            note(c + 2, y + 1, 'C' + (n + 4));
            note(c + 2, y + 13, '66p5');
        }
        if (r < 6) {
            wire(`M1582 ${y}V${returns[r]}H741V${rows[r + 1]}H752`);
        }
    });
    wire('M752 607H681V929H648');
}

// Input filter with the two op-amps
function drawFilter() {
    wire('M359 921V903H626V923M359 934V957M359 971V989H626V935M359 948H337V1011H648V984');
    wire('M385 939V922H431M385 952V1011M447 922H464M481 922H507M455 922V892H495M498 892H537V936');
    wire('M489 922V951M489 953V1017M515 903V922M515 932V989M507 929H501V959H537M522 926H543');
    wire('M537 951V968M537 984V1011M559 926H577M566 926V892H606M609 892H648V938M592 926H618');
    wire('M600 926V951M600 953V1011M618 933H611V963H648M633 929H648M648 953V968');
    ground(489, 1018);
    source(358, 928);
    source(358, 964);
    source(384, 945);
    part('M356 924H361M356 960H361M356 932H361M359 930V935M356 969H361M359 966V971M382 941H387M385 938V944M382 952H387');
    resistorH(431, 922);
    resistorH(464, 922);
    resistorH(543, 926);
    resistorH(577, 926);
    resistorV(537, 936);
    resistorV(537, 968);
    resistorV(648, 938);
    resistorV(648, 968);
    part('M495 888V897M498 888V897M606 888V897M609 888V897M485 952H493M596 952H604M485 951H493M596 951H604');
    part('M507 918V934L522 926ZM618 922V938L633 930ZM508 922H512M510 920V924M508 929H511M619 926H623M621 924V928M619 933H622');
    [[359, 948], [385, 1011], [455, 922], [489, 922], [489, 1011], [515, 903], [515, 989], [537, 926],
     [537, 959], [537, 1011], [566, 926], [600, 926], [600, 1011], [648, 929], [648, 963]].forEach(p => node(p[0], p[1]));

    [[347, 918, 'V2'], [350, 937, '5'], [347, 955, 'V3'], [350, 974, '5'], [390, 937, 'V1'],
     [390, 962, 'AC 1'], [346, 1016, '.tran 0.001'],
     [435, 915, 'R1'], [435, 928, '383'], [469, 915, 'R2'], [465, 928, '2.43k'], [493, 885, 'C1'], [493, 899, '33n'],
     [517, 918, 'LT6202'], [518, 933, 'U1'], [604, 885, 'C2'], [604, 899, '33n'], [628, 922, 'LT6202'], [629, 937, 'U2'],
     [547, 919, 'R3'], [545, 932, '845'], [579, 919, 'R4'], [579, 932, '11k'], [490, 946, 'C4'], [491, 959, '33n'],
     [602, 946, 'C3'], [603, 957, '3.3n'], [541, 938, 'R5'], [541, 947, '3.25k'], [541, 972, 'R6'], [541, 980, '1.21k'],
     [653, 942, 'R7'], [653, 951, '1.51k'], [653, 972, 'R10'], [653, 980, '2.87k'], [668, 926, 'in']
    ].forEach(t => note(t[0], t[1], t[2]));
    note(390, 954, 'PULSE(0 5 0.0001 0.000001 0.000001 0.00001)', 'start', 'small');
}

function drawOutputs() {
    // Load
    resistorV(1060, 899);
    wire('M1060 915V948');
    ground(1060, 948);
    note(1056, 867, 'out');
    note(1064, 901, 'R8');
    note(1064, 910, '1Meg');

    // Controlled sources
    [[1297, 1264, 'in', 'inw', 'E1'], [1401, 1367, 'out', 'outw', 'E2']].forEach(([x, gx, input, output, name]) => {
        wire(`M${x} 927V907H${x + 26}M${gx} 929H${x - 7}M${x - 7} 940H${gx}V959M${x} 941V959`);
        ground(gx, 959);
        ground(x, 959);
        source(x, 934);
        part(`M${x - 2} 931h4M${x} 929v4M${x - 2} 938h4M${x - 12} 931h4M${x - 10} 929v4M${x - 12} 938h4`);
        note(gx, 929, input, 'end');
        note(x + 26, 907, output);
        note(x + 6, 925, name);
        note(x + 6, 944, '0.25');
    });
    note(1310, 985, '.wave "out.wav" 32 200meg inw outw');
}

function drawComments() {
    ['Kabel CAT5e', '4x2xAWG26', '', 'Impedanz 100 Ohm', 'L 665.94 nH/m', 'C 66.5 pF/m', '', 'Einzelleiter',
     'Querschnitt 0.128 mm2', 'Außendurchmesser 0.405 mm', 'Widerstand 146 Ohm/km',
     'Kabeldurchmesser 1.06 mm (mit Isolation)'
    ].forEach((line, i) => note(540, 656 + i * 6.5, line, 'start', 'comment'));
}

drawPlot();
drawDelayLine();
drawFilter();
drawOutputs();
drawComments();
schematic.innerHTML = out;
```
